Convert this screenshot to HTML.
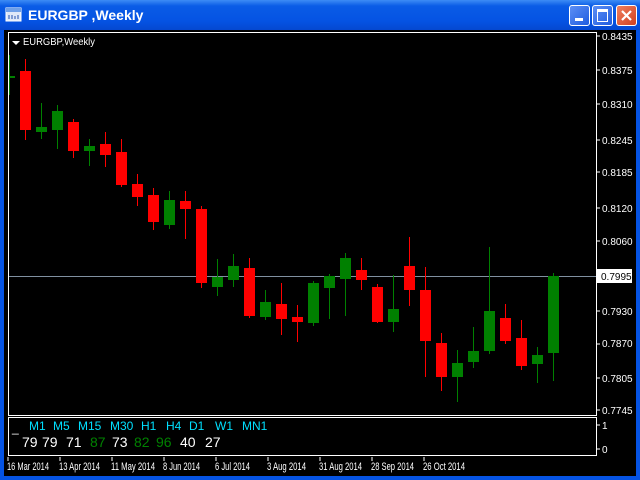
<!DOCTYPE html>
<html><head><style>
body{margin:0;width:640px;height:480px;overflow:hidden;background:#0553e3;font-family:"Liberation Sans",sans-serif;}
#t{position:absolute;left:0;top:0;width:640px;height:30px;background:linear-gradient(#3d8cf5,#0a5ce6 20%,#0553e3 70%,#0548d0);}
#tt{position:absolute;left:28px;top:7px;color:#fff;font-weight:bold;font-size:14px;}
.b{position:absolute;top:5px;width:19px;height:19px;border:1px solid #fff;border-radius:3px;background:linear-gradient(135deg,#5d8ff5,#1f5ce0);}
#cl{position:absolute;left:4px;top:30px;width:632px;height:446px;background:#000;}
svg text{font-family:"Liberation Sans",sans-serif;}
</style></head><body>
<div id="t"></div>
<svg style="position:absolute;left:5px;top:7px" width="18" height="16"><rect x="1" y="1" width="15" height="13" fill="#dfe8f8" stroke="#fff"/><rect x="1" y="1" width="15" height="4" fill="#6fa0e8"/><path d="M4 8v4M7 8v4M10 9v3M13 8v4" stroke="#2050b0"/></svg>
<div id="tt">EURGBP ,Weekly</div>
<div class="b" style="left:569px"><div style="position:absolute;left:5px;top:12px;width:8px;height:3px;background:#fff"></div></div>
<div class="b" style="left:592px"><div style="position:absolute;left:4px;top:3px;width:9px;height:9px;border:1px solid #fff;border-top-width:3px"></div></div>
<div class="b" style="left:616px;background:linear-gradient(135deg,#f08060,#d04020)"><svg width="19" height="19"><path d="M5 5L14 14M14 5L5 14" stroke="#fff" stroke-width="2.2"/></svg></div>
<div id="cl"></div>
<svg style="position:absolute;left:0;top:0" width="640" height="480">
<rect x="8.5" y="32.5" width="588" height="383" fill="none" stroke="#fff"/>
<rect x="8.5" y="417.5" width="588" height="38" fill="none" stroke="#fff"/>
<path d="M12 41l4 4 4-4z" fill="#fff"/>
<text x="23" y="45" fill="#fff" font-size="10.5" textLength="72" lengthAdjust="spacingAndGlyphs">EURGBP,Weekly</text>
<line x1="9" y1="276.5" x2="596" y2="276.5" stroke="#8090a0"/>
<g id="c"></g>
<g fill="#fff" font-size="10">
<text x="602" y="40">0.8435</text><text x="602" y="74">0.8375</text><text x="602" y="108">0.8310</text><text x="602" y="144">0.8245</text><text x="602" y="176">0.8185</text><text x="602" y="212">0.8120</text><text x="602" y="245">0.8060</text><text x="602" y="315">0.7930</text><text x="602" y="347">0.7870</text><text x="602" y="382">0.7805</text><text x="602" y="414">0.7745</text>
<text x="602" y="429">1</text><text x="602" y="453">0</text>
</g>
<g stroke="#fff"><path d="M597 36h3M597 70h3M597 104h3M597 140h3M597 172h3M597 208h3M597 241h3M597 311h3M597 344h3M597 378h3M597 410h3M597 425h3M597 449h3"/></g>
<rect x="597" y="269" width="35" height="14" fill="#fff"/>
<text x="601" y="280" fill="#000" font-size="10">0.7995</text>
<text x="12" y="432" fill="#fff" font-size="12">_</text>
<g fill="#00e0ff" font-size="12"><text x="29" y="430">M1</text><text x="53" y="430">M5</text><text x="78" y="430">M15</text><text x="110" y="430">M30</text><text x="141" y="430">H1</text><text x="166" y="430">H4</text><text x="189" y="430">D1</text><text x="215" y="430">W1</text><text x="242" y="430">MN1</text></g>
<g font-size="14"><text x="22" y="447" fill="#fff">79</text><text x="42" y="447" fill="#fff">79</text><text x="66" y="447" fill="#fff">71</text><text x="90" y="447" fill="#008000">87</text><text x="112" y="447" fill="#fff">73</text><text x="134" y="447" fill="#008000">82</text><text x="156" y="447" fill="#008000">96</text><text x="180" y="447" fill="#fff">40</text><text x="205" y="447" fill="#fff">27</text></g>
<g fill="#fff" font-size="11"><text x="7" y="470" textLength="42" lengthAdjust="spacingAndGlyphs">16 Mar 2014</text><text x="59" y="470" textLength="41" lengthAdjust="spacingAndGlyphs">13 Apr 2014</text><text x="111" y="470" textLength="44" lengthAdjust="spacingAndGlyphs">11 May 2014</text><text x="163" y="470" textLength="37" lengthAdjust="spacingAndGlyphs">8 Jun 2014</text><text x="215" y="470" textLength="35" lengthAdjust="spacingAndGlyphs">6 Jul 2014</text><text x="267" y="470" textLength="39" lengthAdjust="spacingAndGlyphs">3 Aug 2014</text><text x="319" y="470" textLength="43" lengthAdjust="spacingAndGlyphs">31 Aug 2014</text><text x="371" y="470" textLength="43" lengthAdjust="spacingAndGlyphs">28 Sep 2014</text><text x="423" y="470" textLength="42" lengthAdjust="spacingAndGlyphs">26 Oct 2014</text></g>
<g stroke="#fff"><path d="M8 457v4M60 457v4M112 457v4M164 457v4M216 457v4M268 457v4M320 457v4M372 457v4M424 457v4"/></g>
</svg>
<script>
var d=[[20,71,130,59,140,0],[36,127,132,103,139,1],[52,111,130,105,149,1],[68,122,151,119,158,0],[84,146,151,139,166,1],[100,144,155,132,167,0],[116,152,185,139,187,0],[132,184,197,174,206,0],[148,195,222,188,230,0],[164,200,225,191,229,1],[180,201,209,191,239,0],[196,209,283,206,288,0],[212,277,287,259,296,1],[228,266,280,254,287,1],[244,268,316,258,318,0],[260,302,317,290,320,1],[276,304,319,283,335,0],[292,317,322,305,342,0],[308,283,323,281,326,1],[324,276,288,274,319,1],[340,258,279,253,316,1],[356,270,280,258,290,0],[372,287,322,284,323,0],[388,309,322,275,332,1],[404,266,290,237,306,0],[420,290,341,267,377,0],[436,343,377,333,391,0],[452,363,377,350,402,1],[468,351,362,327,368,1],[484,311,351,247,354,1],[500,318,341,304,344,0],[516,338,366,320,370,0],[532,355,364,347,383,1],[548,276,353,273,381,1]];
var s='<line x1="9.5" y1="55" x2="9.5" y2="95" stroke="#008000"/><rect x="9" y="76" width="6" height="2" fill="#008000"/>';
d.forEach(function(c){var col=c[5]?'#008000':'#ff0000';s+='<line x1="'+(c[0]+5.5)+'" y1="'+c[3]+'" x2="'+(c[0]+5.5)+'" y2="'+c[4]+'" stroke="'+col+'"/><rect x="'+c[0]+'" y="'+c[1]+'" width="11" height="'+(c[2]-c[1])+'" fill="'+col+'"/>';});
document.getElementById('c').innerHTML=s;
</script>
</body></html>
